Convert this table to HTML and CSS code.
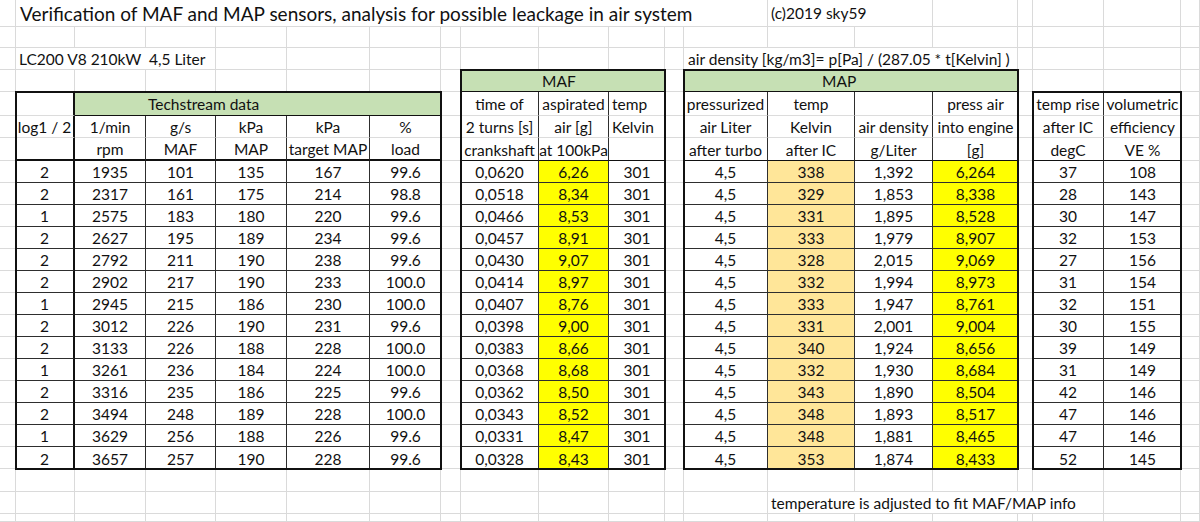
FILE: index.html
```html
<!DOCTYPE html>
<html>
<head>
<meta charset="utf-8">
<title>MAF MAP verification</title>
<link rel="stylesheet" href="styles.css">
</head>
<body>
<div class="sheet">
  <div class="vlines"><div></div><div></div><div></div><div></div><div></div><div></div><div></div><div></div><div></div><div></div><div></div><div></div><div></div><div></div><div></div><div></div><div></div><div></div><div></div><div></div></div>
  <div class="hlines"><div></div><div></div><div></div><div></div><div></div><div></div><div></div><div></div><div></div><div></div><div></div><div></div><div></div><div></div><div></div><div></div><div></div><div></div><div></div><div></div><div></div><div></div><div></div><div></div></div>

  <div class="txt title">Verification of MAF and MAP sensors, analysis for possible leackage in air system</div>
  <div class="txt copy">(c)2019 sky59</div>
  <div class="txt model">LC200 V8 210kW&nbsp; 4,5 Liter</div>
  <div class="txt formula">air density [kg/m3]= p[Pa] / (287.05 * t[Kelvin] )</div>
  <div class="txt note">temperature is adjusted to fit MAF/MAP info</div>

  <div class="tbl tech">
    <div class="r h"><div></div><div class="g">Techstream data</div></div>
    <div class="r h"><div>log1 / 2</div><div>1/min</div><div>g/s</div><div>kPa</div><div>kPa</div><div>%</div></div>
    <div class="r hl"><div></div><div>rpm</div><div>MAF</div><div>MAP</div><div>target MAP</div><div>load</div></div>
    <div class="r"><div>2</div><div>1935</div><div>101</div><div>135</div><div>167</div><div>99.6</div></div>
    <div class="r"><div>2</div><div>2317</div><div>161</div><div>175</div><div>214</div><div>98.8</div></div>
    <div class="r"><div>1</div><div>2575</div><div>183</div><div>180</div><div>220</div><div>99.6</div></div>
    <div class="r"><div>2</div><div>2627</div><div>195</div><div>189</div><div>234</div><div>99.6</div></div>
    <div class="r"><div>2</div><div>2792</div><div>211</div><div>190</div><div>238</div><div>99.6</div></div>
    <div class="r"><div>2</div><div>2902</div><div>217</div><div>190</div><div>233</div><div>100.0</div></div>
    <div class="r"><div>1</div><div>2945</div><div>215</div><div>186</div><div>230</div><div>100.0</div></div>
    <div class="r"><div>2</div><div>3012</div><div>226</div><div>190</div><div>231</div><div>99.6</div></div>
    <div class="r"><div>2</div><div>3133</div><div>226</div><div>188</div><div>228</div><div>100.0</div></div>
    <div class="r"><div>1</div><div>3261</div><div>236</div><div>184</div><div>224</div><div>100.0</div></div>
    <div class="r"><div>2</div><div>3316</div><div>235</div><div>186</div><div>225</div><div>99.6</div></div>
    <div class="r"><div>2</div><div>3494</div><div>248</div><div>189</div><div>228</div><div>100.0</div></div>
    <div class="r"><div>1</div><div>3629</div><div>256</div><div>188</div><div>226</div><div>99.6</div></div>
    <div class="r"><div>2</div><div>3657</div><div>257</div><div>190</div><div>228</div><div>99.6</div></div>
  </div>

  <div class="tbl maf">
    <div class="r"><div class="g">MAF</div></div>
    <div class="r h"><div>time of</div><div>aspirated</div><div class="l">temp</div></div>
    <div class="r h"><div>2 turns [s]</div><div>air [g]</div><div class="l">Kelvin</div></div>
    <div class="r hl"><div>crankshaft</div><div>at 100kPa</div><div></div></div>
    <div class="r"><div>0,0620</div><div class="y">6,26</div><div>301</div></div>
    <div class="r"><div>0,0518</div><div class="y">8,34</div><div>301</div></div>
    <div class="r"><div>0,0466</div><div class="y">8,53</div><div>301</div></div>
    <div class="r"><div>0,0457</div><div class="y">8,91</div><div>301</div></div>
    <div class="r"><div>0,0430</div><div class="y">9,07</div><div>301</div></div>
    <div class="r"><div>0,0414</div><div class="y">8,97</div><div>301</div></div>
    <div class="r"><div>0,0407</div><div class="y">8,76</div><div>301</div></div>
    <div class="r"><div>0,0398</div><div class="y">9,00</div><div>301</div></div>
    <div class="r"><div>0,0383</div><div class="y">8,66</div><div>301</div></div>
    <div class="r"><div>0,0368</div><div class="y">8,68</div><div>301</div></div>
    <div class="r"><div>0,0362</div><div class="y">8,50</div><div>301</div></div>
    <div class="r"><div>0,0343</div><div class="y">8,52</div><div>301</div></div>
    <div class="r"><div>0,0331</div><div class="y">8,47</div><div>301</div></div>
    <div class="r"><div>0,0328</div><div class="y">8,43</div><div>301</div></div>
  </div>

  <div class="tbl map">
    <div class="r"><div class="g">MAP</div></div>
    <div class="r h"><div>pressurized</div><div>temp</div><div></div><div>press air</div></div>
    <div class="r h"><div>air Liter</div><div>Kelvin</div><div>air density</div><div>into engine</div></div>
    <div class="r hl"><div>after turbo</div><div>after IC</div><div>g/Liter</div><div>[g]</div></div>
    <div class="r"><div>4,5</div><div class="o">338</div><div>1,392</div><div class="y">6,264</div></div>
    <div class="r"><div>4,5</div><div class="o">329</div><div>1,853</div><div class="y">8,338</div></div>
    <div class="r"><div>4,5</div><div class="o">331</div><div>1,895</div><div class="y">8,528</div></div>
    <div class="r"><div>4,5</div><div class="o">333</div><div>1,979</div><div class="y">8,907</div></div>
    <div class="r"><div>4,5</div><div class="o">328</div><div>2,015</div><div class="y">9,069</div></div>
    <div class="r"><div>4,5</div><div class="o">332</div><div>1,994</div><div class="y">8,973</div></div>
    <div class="r"><div>4,5</div><div class="o">333</div><div>1,947</div><div class="y">8,761</div></div>
    <div class="r"><div>4,5</div><div class="o">331</div><div>2,001</div><div class="y">9,004</div></div>
    <div class="r"><div>4,5</div><div class="o">340</div><div>1,924</div><div class="y">8,656</div></div>
    <div class="r"><div>4,5</div><div class="o">332</div><div>1,930</div><div class="y">8,684</div></div>
    <div class="r"><div>4,5</div><div class="o">343</div><div>1,890</div><div class="y">8,504</div></div>
    <div class="r"><div>4,5</div><div class="o">348</div><div>1,893</div><div class="y">8,517</div></div>
    <div class="r"><div>4,5</div><div class="o">348</div><div>1,881</div><div class="y">8,465</div></div>
    <div class="r"><div>4,5</div><div class="o">353</div><div>1,874</div><div class="y">8,433</div></div>
  </div>

  <div class="tbl ve">
    <div class="r h"><div>temp rise</div><div>volumetric</div></div>
    <div class="r h"><div>after IC</div><div>efficiency</div></div>
    <div class="r hl"><div>degC</div><div>VE %</div></div>
    <div class="r"><div>37</div><div>108</div></div>
    <div class="r"><div>28</div><div>143</div></div>
    <div class="r"><div>30</div><div>147</div></div>
    <div class="r"><div>32</div><div>153</div></div>
    <div class="r"><div>27</div><div>156</div></div>
    <div class="r"><div>31</div><div>154</div></div>
    <div class="r"><div>32</div><div>151</div></div>
    <div class="r"><div>30</div><div>155</div></div>
    <div class="r"><div>39</div><div>149</div></div>
    <div class="r"><div>31</div><div>149</div></div>
    <div class="r"><div>42</div><div>146</div></div>
    <div class="r"><div>47</div><div>146</div></div>
    <div class="r"><div>47</div><div>146</div></div>
    <div class="r"><div>52</div><div>145</div></div>
  </div>
</div>
</body>
</html>
```
FILE: styles.css
```css
:root {
  --cols: 16px 59px 71px 70px 71px 83px 71px 20px 78px 70px 56px 19px 84px 87px 78px 85px 15px 71px 77px 19px;
  --rows: 27px 21px 22px 22px 24px 22px 23px repeat(14, 22px) 23px 22px 8px;
  --grid: #dadada;
  --ink: #111;
  --line: #2e2e2e;
}
* { box-sizing: border-box; }
html, body { margin: 0; background: #fff; }
body {
  width: 1200px;
  height: 522px;
  overflow: hidden;
  font-family: Lato, "Open Sans", sans-serif;
  font-size: 15.5px;
  color: var(--ink);
}
.sheet {
  display: grid;
  grid-template-columns: var(--cols);
  grid-template-rows: var(--rows);
  width: 1200px;
  height: 522px;
}
.vlines {
  grid-area: 1 / 1 / -1 / -1;
  display: grid;
  grid-template-columns: var(--cols);
}
.vlines div { border-right: 1px solid var(--grid); }
.hlines {
  grid-area: 1 / 1 / -1 / -1;
  display: grid;
  grid-template-rows: var(--rows);
}
.hlines div { border-bottom: 1px solid var(--grid); }

.txt {
  background: #fff;
  border-right: 1px solid var(--grid);
  border-bottom: 1px solid var(--grid);
  display: flex;
  align-items: center;
  padding-left: 3px;
  white-space: nowrap;
}
.title { grid-area: 1 / 2 / 2 / 14; font-size: 19px; padding-left: 4px; }
.copy { grid-area: 1 / 14 / 2 / 16; }
.model { grid-area: 3 / 2 / 4 / 5; }
.formula { grid-area: 3 / 13 / 4 / 17; padding-left: 4px; }
.note { grid-area: 23 / 14 / 24 / 19; }

.tbl {
  display: grid;
  background: #fff;
  outline: 2px solid #111;
  outline-offset: -1px;
  z-index: 1;
}
.tech {
  grid-area: 5 / 2 / 22 / 8;
  grid-template-columns: 59px 71px 70px 71px 83px 71px;
  grid-template-rows: 24px 22px 23px repeat(14, 22px);
}
.maf {
  grid-area: 4 / 9 / 22 / 12;
  grid-template-columns: 78px 70px 56px;
  grid-template-rows: 22px 24px 22px 23px repeat(14, 22px);
}
.map {
  grid-area: 4 / 13 / 22 / 17;
  grid-template-columns: 84px 87px 78px 85px;
  grid-template-rows: 22px 24px 22px 23px repeat(14, 22px);
}
.ve {
  grid-area: 5 / 18 / 22 / 20;
  grid-template-columns: 71px 77px;
  grid-template-rows: 24px 22px 23px repeat(14, 22px);
}

.r { display: contents; }
.r > div {
  display: flex;
  align-items: center;
  justify-content: center;
  white-space: nowrap;
  border-right: 1px solid var(--line);
  border-bottom: 1px solid var(--line);
  padding-top: 1px;
}
.r > div:last-child { border-right: 0; }
.r:last-child > div { border-bottom: 0; }
.r.h > div { border-bottom-color: #dcdcdc; }
.r.hl > div { border-bottom: 1px solid #111; }
.tech .r.hl > div { border-bottom-width: 2px; }
.tech .r > div:first-child { border-right: 2px solid #111; }

.tbl .r > .g {
  background: #c6e0b4;
  grid-column: 1 / -1;
  justify-content: flex-start;
  border-right: 0;
  border-bottom: 1px solid #111;
}
.tech .r > .g { grid-column: span 5; padding-left: 73px; }
.maf .r > .g { padding-left: 81px; }
.map .r > .g { padding-left: 138px; }

.r > .l { justify-content: flex-start; padding-left: 3px; }
.r > .y { background: #ffff00; }
.r > .o { background: #ffe699; }
```
